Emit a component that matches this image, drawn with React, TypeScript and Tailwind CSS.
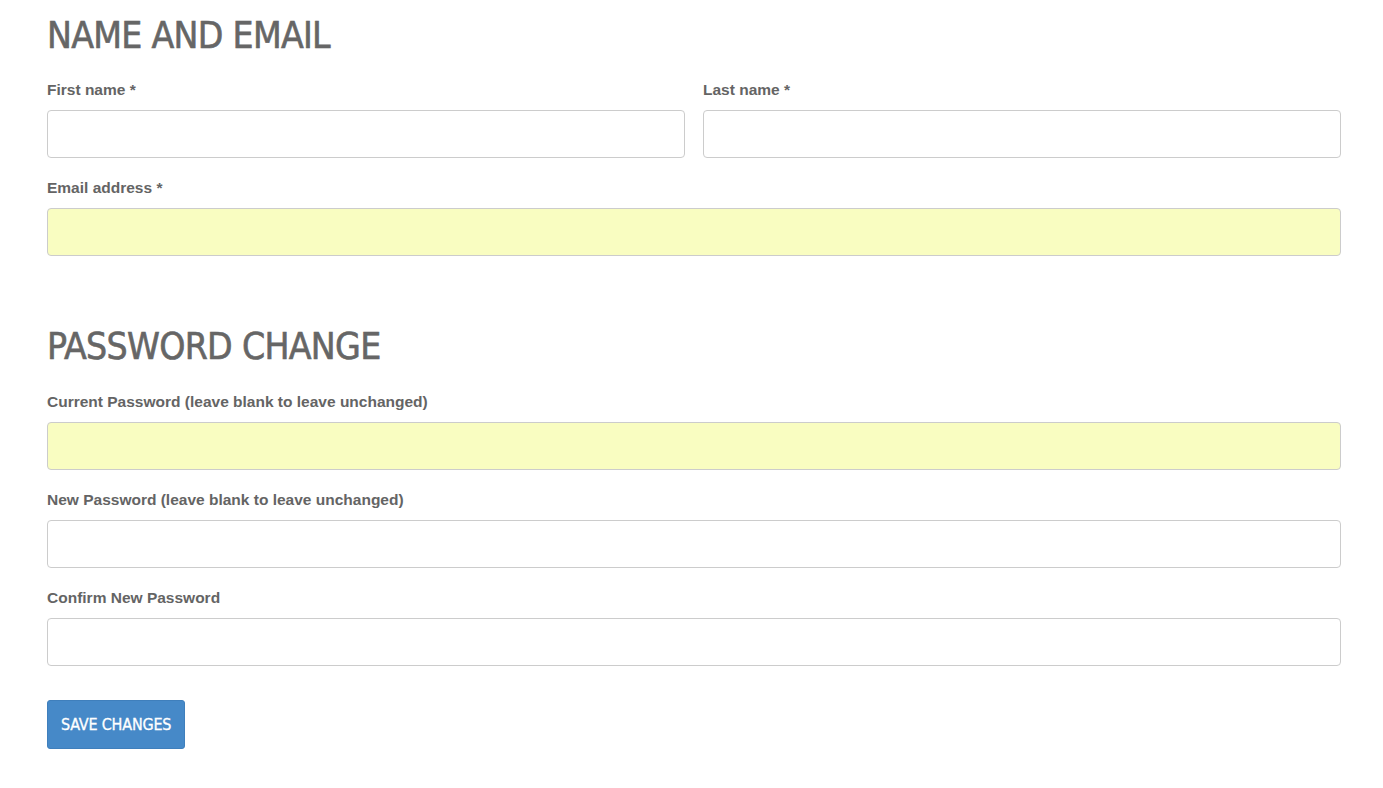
import type { ReactNode } from 'react';

const headingFont = "font-['DejaVu_Sans_Condensed','Liberation_Sans_Narrow',sans-serif]";

function Field({ label, autofill, children }: { label: string; autofill?: boolean; children?: ReactNode }) {
  return (
    <div className="mb-5 flex-1">
      <label className="mb-[10px] block text-[15.5px] font-bold leading-5 text-[#646464]">{label}</label>
      <input
        type="text"
        className={`block h-12 w-full rounded-[4px] border border-[#cccccc] px-3 text-[14px] outline-none ${
          autofill ? 'bg-[#f9fdc1]' : 'bg-white'
        }`}
      />
      {children}
    </div>
  );
}

export default function App() {
  return (
    <div className="min-h-screen bg-white font-['Liberation_Sans',Arial,sans-serif]">
      <form className="px-[47px] pr-[42px] pt-3" onSubmit={(e) => e.preventDefault()}>
        <h2
          className={`${headingFont} mb-5 text-[37px] leading-[48px] tracking-[-0.7px] text-[#666666] uppercase [-webkit-text-stroke:0.6px_#666666]`}
        >
          Name and Email
        </h2>
        <div className="flex gap-[18px]">
          <Field label="First name *" />
          <Field label="Last name *" />
        </div>
        <Field label="Email address *" autofill />

        <h2
          className={`${headingFont} mb-[21px] mt-[67px] text-[37px] leading-[48px] tracking-[-0.7px] text-[#666666] uppercase [-webkit-text-stroke:0.6px_#666666]`}
        >
          Password Change
        </h2>
        <Field label="Current Password (leave blank to leave unchanged)" autofill />
        <Field label="New Password (leave blank to leave unchanged)" />
        <Field label="Confirm New Password" />

        <button
          type="submit"
          className={`${headingFont} mt-[14px] h-[49px] rounded-[3px] border border-[#3f7fbc] bg-[#4689c8] px-[13px] text-[16px] tracking-[-0.2px] text-white uppercase [-webkit-text-stroke:0.3px_#ffffff]`}
        >
          Save Changes
        </button>
      </form>
    </div>
  );
}
